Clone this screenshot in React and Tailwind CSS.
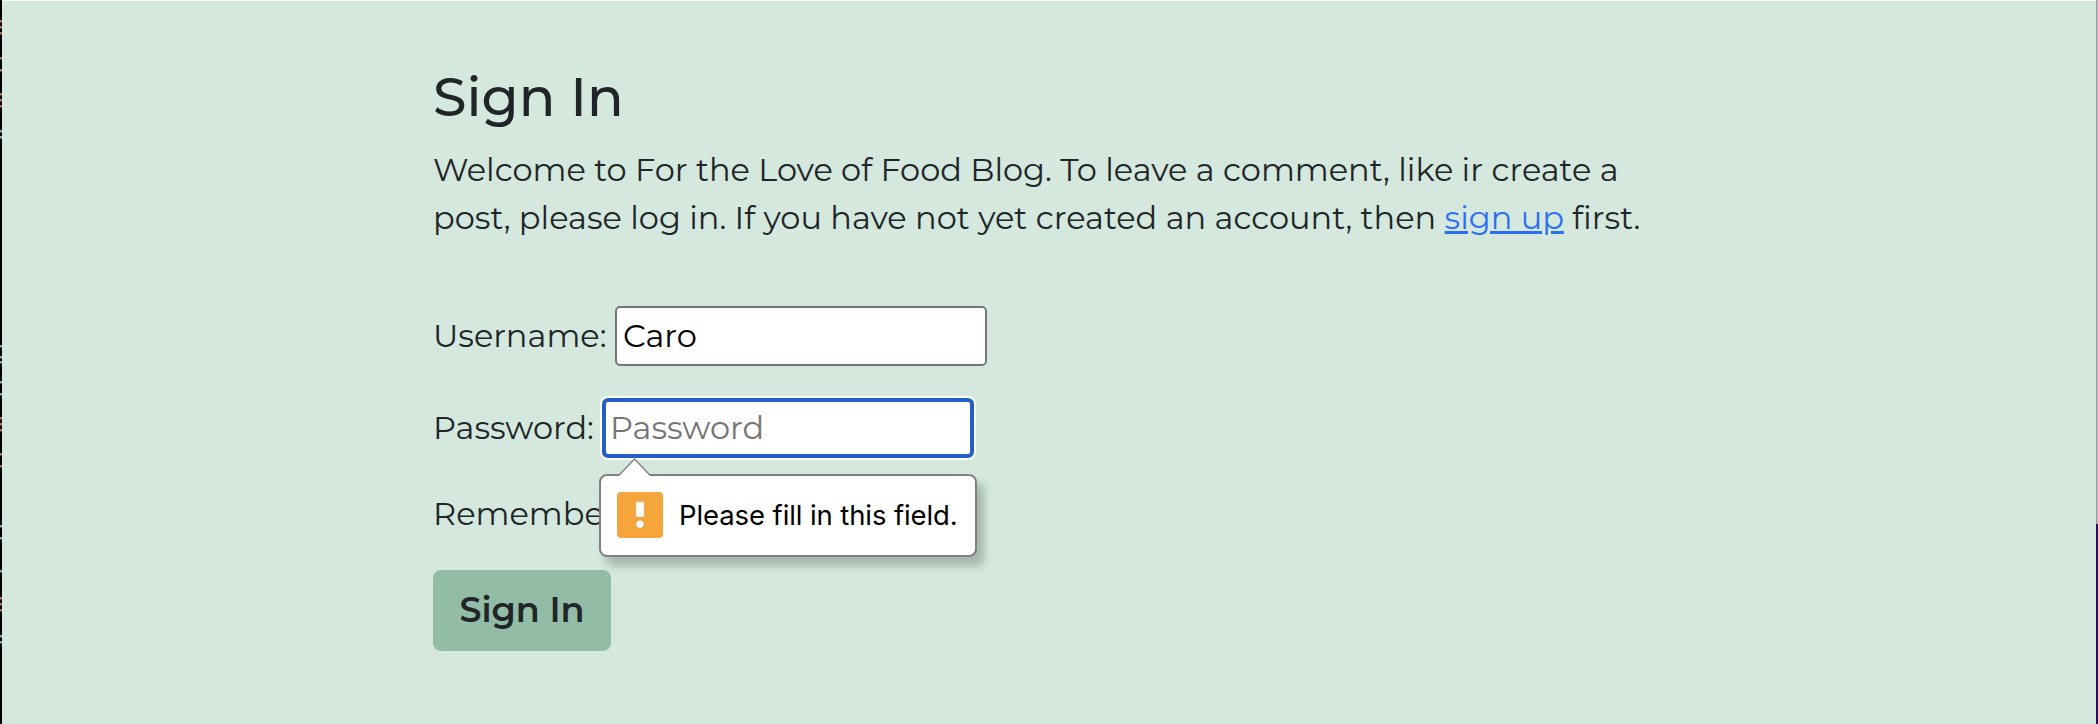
const marks = {
  "#a8705c": [20, 26, 32, 57, 69, 93, 99, 105, 417, 423, 429, 453, 465, 597, 603, 609],
  "#9a9aa0": [130, 136, 345, 356, 361, 381, 393, 525, 537, 570, 635, 641],
};

function WindowEdge() {
  return (
    <svg width="2" height="724" className="block shrink-0 bg-black" aria-hidden="true">
      {Object.entries(marks).map(([color, rows]) =>
        rows.map((y) => <rect key={y} x="0" y={y} width="2" height="2.5" fill={color} />)
      )}
    </svg>
  );
}

function ValidationBubble() {
  return (
    <div className="absolute -left-[3px] top-[60px] z-10 w-[378px] pt-4" role="alert">
      <div className="flex h-[83px] items-center rounded-[8px] border-2 border-[#808080] bg-white pb-px pl-4 shadow-[7px_9px_8px_rgba(0,0,0,0.22)]">
        <svg width="46" height="46" viewBox="0 0 46 46" className="shrink-0" aria-hidden="true">
          <rect width="46" height="46" rx="4" fill="#f4a63d" />
          <path d="M18.5 9h9v16h-9z" fill="#f0bd85" />
          <path d="M19.3 10.5h7.4v14h-7.4z" fill="white" />
          <circle cx="23" cy="33" r="4" fill="#f18d3f" />
          <circle cx="23" cy="32.3" r="3.7" fill="white" />
        </svg>
        <span className="ml-4 whitespace-nowrap font-['Inter',sans-serif] text-[27.5px] tracking-[-0.1px] text-black">Please fill in this field.</span>
      </div>
      <svg width="34" height="19" viewBox="0 0 34 19" className="absolute left-[19px] top-0" aria-hidden="true">
        <path d="M1 17.5L16.5 1L32 17.5V19H1z" fill="white" />
        <path d="M1 17.2L16.5 1L32 17.2" fill="none" stroke="#808080" strokeWidth="1.3" />
      </svg>
    </div>
  );
}

export default function App() {
  return (
    <div className="flex h-[724px] w-[2098px] overflow-hidden bg-[#d4e8dd] font-['Montserrat','Inter',sans-serif] text-[32px] leading-[48px] text-[#212529]">
      <WindowEdge />
      <main className="flex-1 border-t border-white pl-[431px] pt-[62px]">
        <h1 className="mb-[14px] text-[54px] font-medium leading-[69px]">Sign In</h1>
        <p className="w-[1230px]">
          Welcome to For the Love of Food Blog. To leave a comment, like ir create a
          post, please log in. If you have not yet created an account, then{" "}
          <a href="#" className="text-[#2b6ff6] underline decoration-[3px] underline-offset-[2px]">sign up</a> first.
        </p>
        <form className="mt-16 flex flex-col items-start" noValidate>
          <div className="flex h-[60px] items-center">
            <label className="w-[182px] whitespace-nowrap" htmlFor="username">Username:</label>
            <input id="username" defaultValue="Caro" className="h-[60px] w-[372px] rounded-[5px] border-2 border-[#767676] bg-white px-[6px] pb-[2px] text-black outline-none" />
          </div>
          <div className="mt-8 flex h-[60px] items-center">
            <label className="w-[169px] whitespace-nowrap" htmlFor="password">Password:</label>
            <div className="relative">
              <input id="password" placeholder="Password" className="block h-[60px] w-[372px] rounded-[6px] border-4 border-[#2260c8] bg-white px-1 pb-[2px] shadow-[0_0_0_2px_white] outline-none placeholder:text-[#757575]" />
              <ValidationBubble />
            </div>
          </div>
          <div className="mt-8 flex h-12 items-center">
            <label className="whitespace-nowrap">Remember Me:</label>
          </div>
          <button type="button" className="mt-8 h-[81px] w-[178px] rounded-[8px] bg-[#93bca6] pb-px text-[35px] font-semibold">Sign In</button>
        </form>
      </main>
      <div className="flex w-[2px] shrink-0 flex-col">
        <div className="h-[524px] border-l border-[#999] bg-[#bdbdbd]" />
        <div className="flex-1 bg-[#2b0d66]" />
      </div>
    </div>
  );
}
